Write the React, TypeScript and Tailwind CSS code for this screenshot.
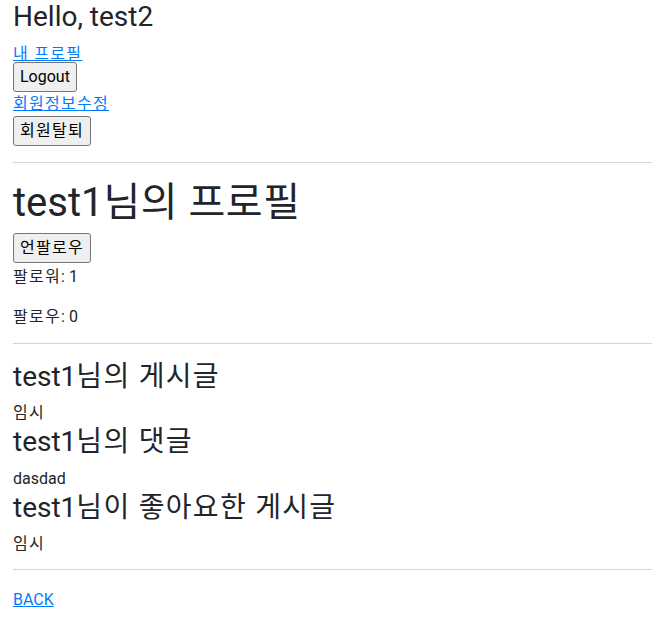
import type { ReactNode } from "react";

// Korean runs get a bit of tracking so Hangul widths match the reference
function K({ children }: { children: ReactNode }) {
  return <span className="tracking-[1.3px]">{children}</span>;
}

export default function App() {
  const font = "font-['Segoe_UI','Roboto','Noto_Sans_CJK_KR',sans-serif]";
  const btn =
    "block h-[30px] rounded-[3px] border border-[#767676] bg-[#efefef] px-[6px] text-[16px] leading-[24px] text-black";
  const link = "block text-[#007bff] underline leading-[24px]";

  const sections = [
    { title: <>test1<K>님의 게시글</K></>, item: <K>임시</K> },
    { title: <>test1<K>님의 댓글</K></>, item: "dasdad" },
    { title: <>test1<K>님이 좋아요한 게시글</K></>, item: <K>임시</K> },
  ];

  return (
    <div className={`${font} min-h-screen bg-white pl-[13px] text-[16px] leading-[1.5] text-[#212529]`}>
      {/* header */}
      <h3 className="mb-2 text-[28px] leading-[1.2] font-normal">Hello, test2</h3>
      <a href="#" className={`${link} h-5 leading-[20px]`}>
        <K>내 프로필</K>
      </a>
      <button className={btn}>Logout</button>
      <a href="#" className={link}>
        <K>회원정보수정</K>
      </a>
      <button className={btn}>
        <K>회원탈퇴</K>
      </button>

      <hr className="my-4 border-t border-[#d4d4d4]" />

      {/* profile */}
      <h1 className="mb-[6px] text-[40px] leading-[1.2] font-normal">
        test1<span className="tracking-[0.5px]">님의 프로필</span>
      </h1>
      <button className={btn}>
        <K>언팔로우</K>
      </button>
      <p className="mb-[14px] pt-[2px]">
        <K>팔로워</K>: 1
      </p>
      <p className="mb-[14px] pt-[2px]">
        <K>팔로우</K>: 0
      </p>

      <hr className="mb-4 border-t border-[#d4d4d4]" />

      {sections.map((s, i) => (
        <div key={i}>
          <h3 className="mb-2 text-[28px] leading-[1.2] font-normal">{s.title}</h3>
          <div>{s.item}</div>
        </div>
      ))}

      <hr className="mt-[13px] mb-4 border-t border-[#d4d4d4]" />
      <a href="#" className={`${link} pt-[2px]`}>
        BACK
      </a>
    </div>
  );
}
